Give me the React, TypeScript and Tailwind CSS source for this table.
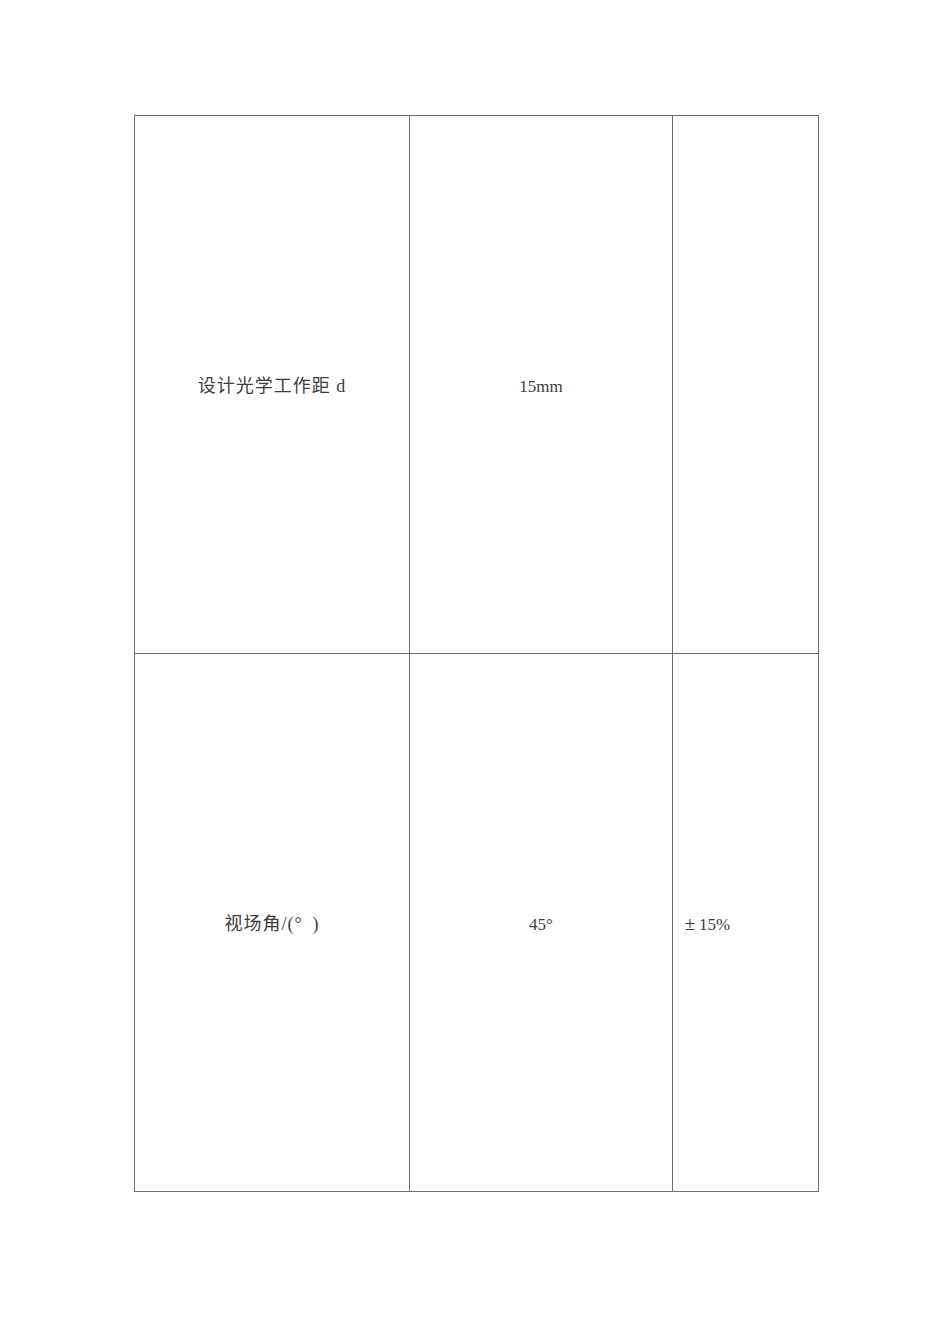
const rows = [
  { name: '设计光学工作距 d', value: '15mm', tol: '' },
  { name: '视场角/(°\u2002)', value: '45°', tol: '±15%' },
];

export default function App() {
  return (
    <div className="w-[950px] h-[1344px] bg-white pt-[115px] pl-[134px]">
      <table
        className="border-collapse text-[16px] text-[#3d3d3d]"
        style={{ fontFamily: '"Liberation Serif", "Noto Sans CJK SC", serif' }}
      >
        <colgroup>
          <col className="w-[275px]" />
          <col className="w-[263px]" />
          <col className="w-[146px]" />
        </colgroup>
        <tbody>
          {rows.map((r, i) => (
            <tr key={i} className="h-[538px]">
              <td className="border border-[#6f6f6f] text-center align-middle pt-[4px] text-[18px] tracking-[1px]">
                {r.name}
              </td>
              <td className="border border-[#6f6f6f] text-center align-middle pt-[4px] text-[17px]">
                {r.value}
              </td>
              <td className="border border-[#6f6f6f] text-left align-middle pt-[4px] pl-[8px] text-[17px]">
                {r.tol && (
                  <>
                    <span className="inline-block w-[18px] text-center text-[19px]">±</span>
                    {r.tol.slice(1)}
                  </>
                )}
              </td>
            </tr>
          ))}
        </tbody>
      </table>
    </div>
  );
}
